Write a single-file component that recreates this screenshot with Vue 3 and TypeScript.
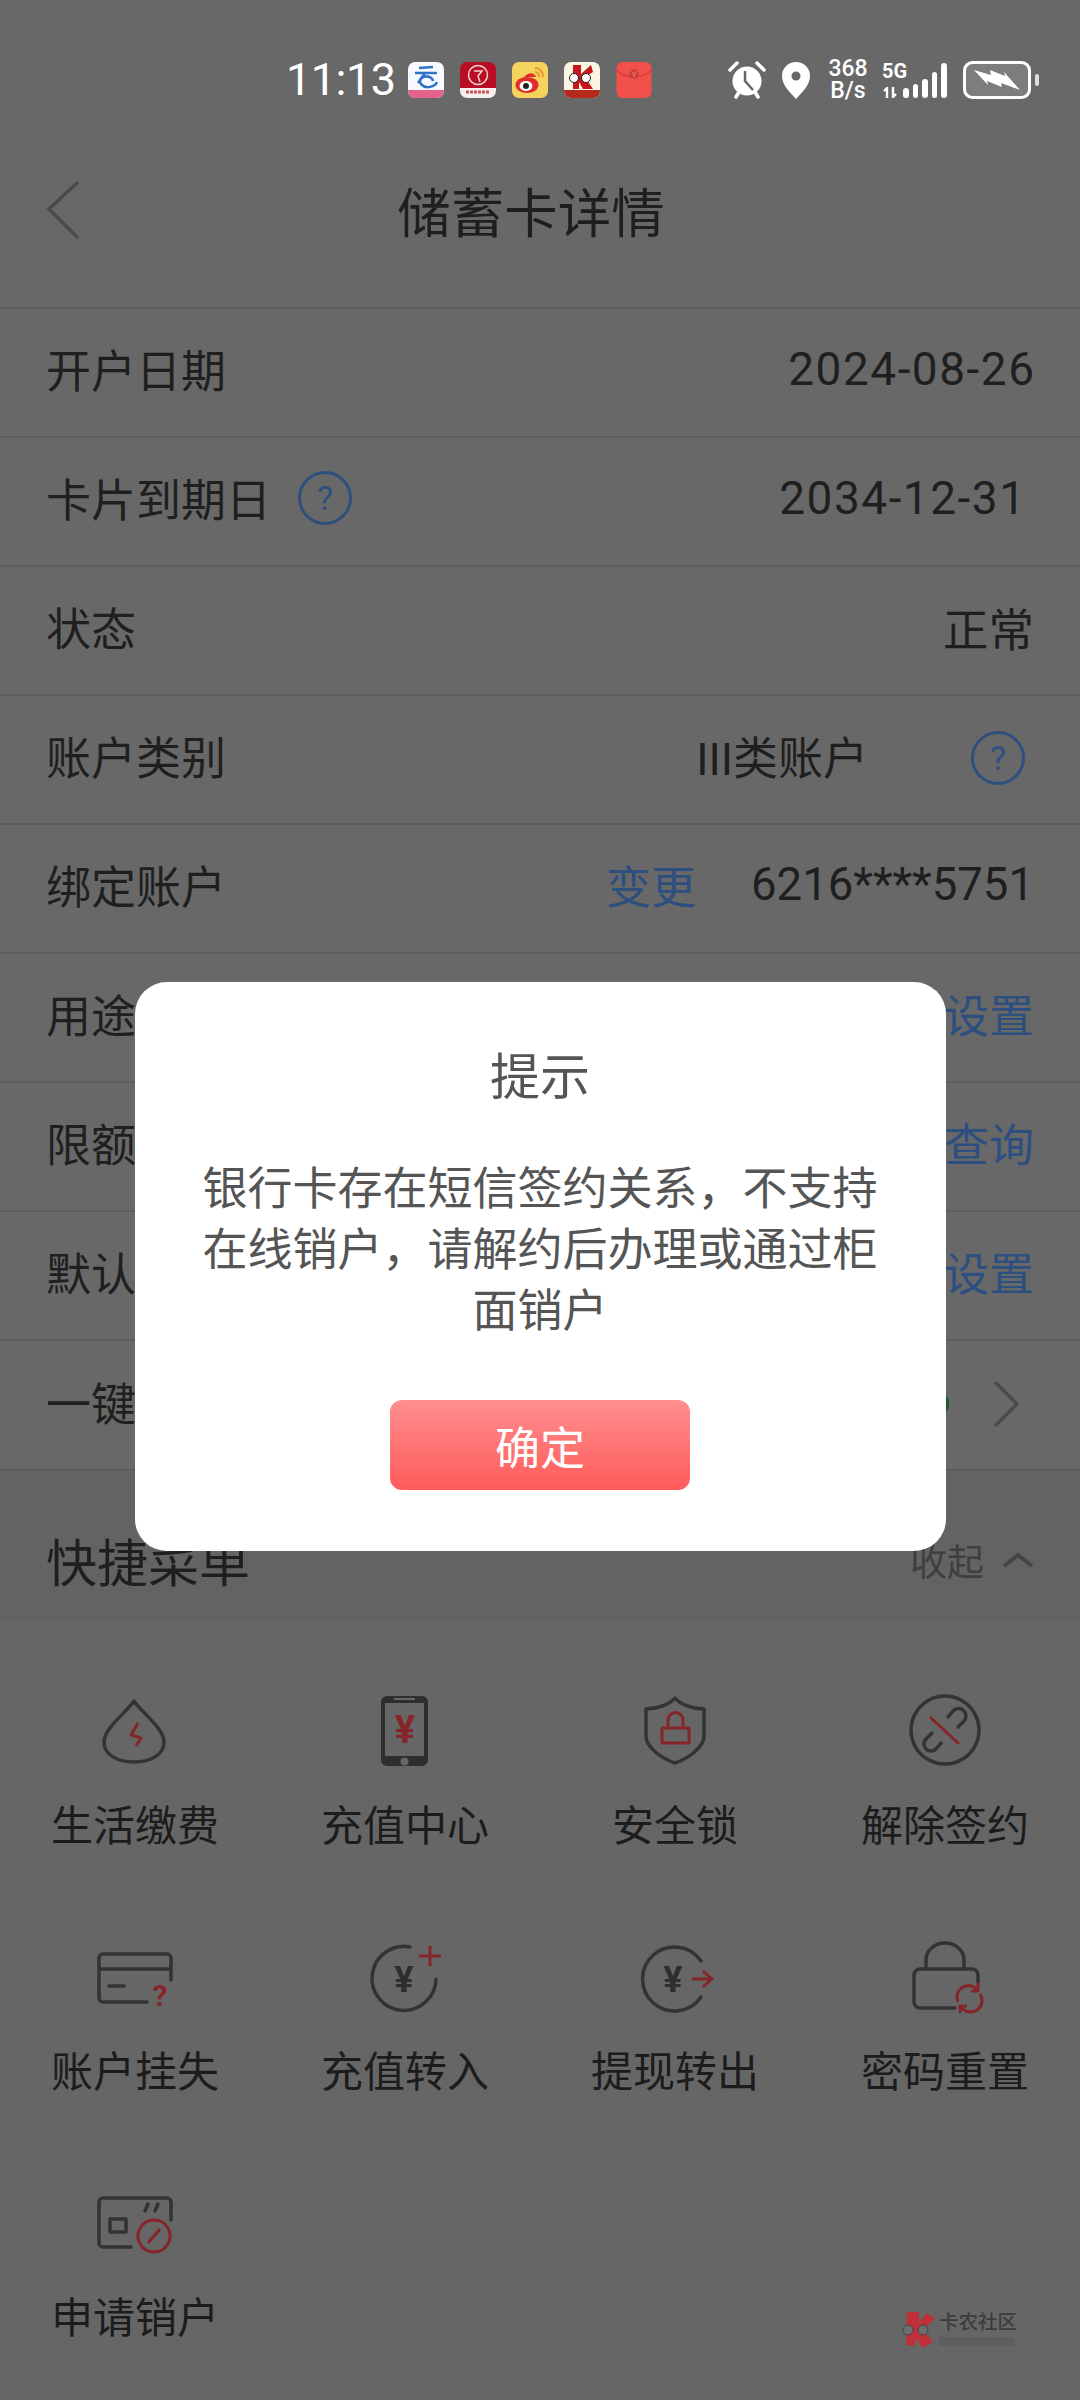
<script setup lang="ts">
interface DetailRow {
  label: string;
  help?: boolean;
  value?: string;
  action?: string;
  date?: boolean;
  kind?: "with-help" | "inset" | "toggle";
}

interface MenuItem {
  label: string;
  dark?: string;
  solid?: string;
  red?: string;
  glyph?: { text: string; x: number; y: number; size: number; red?: boolean };
}

const rows: DetailRow[] = [
  { label: "开户日期", value: "2024-08-26", date: true },
  { label: "卡片到期日", help: true, value: "2034-12-31", date: true, kind: "inset" },
  { label: "状态", value: "正常" },
  { label: "账户类别", value: "III类账户", kind: "with-help" },
  { label: "绑定账户", action: "变更", value: "6216****5751" },
  { label: "用途", action: "设置" },
  { label: "限额", action: "查询" },
  { label: "默认", action: "设置" },
  { label: "一键", kind: "toggle" },
];

const menu: MenuItem[] = [
  {
    label: "生活缴费",
    dark: "M39 11C32 22 9 38 9 52C9 65 23 72 39 72C55 72 69 65 69 52C69 38 46 22 39 11Z",
    red: "M43 33L36 45L46 48L41 56",
  },
  {
    label: "充值中心",
    solid:
      "M22 6H57A6 6 0 0 1 63 12V70A6 6 0 0 1 57 76H22A6 6 0 0 1 16 70V12A6 6 0 0 1 22 6ZM20 13V66H59V13ZM29 8V10H50V8ZM39.500 67.500A4 4 0 1 0 39.501 75.500A4 4 0 1 0 39.500 67.500Z",
    glyph: { text: "¥", x: 40, y: 53, size: 38, red: true },
  },
  {
    label: "安全锁",
    dark: "M40 8C35 14 23 19 11 19V46C11 58 28 69 40 73C52 69 69 58 69 46V19C57 19 45 14 40 8Z",
    red: "M27 38H54V53H27ZM33 38V30A7.500 7.500 0 0 1 48 30V38",
  },
  {
    label: "解除签约",
    dark: "M40 6A34 34 0 1 0 40.010 6ZM43 27L48 21A7 7 0 0 1 59 31L53 37M36 53L31 59A7 7 0 0 1 21 49L27 43",
    red: "M25 27L54 54",
  },
  {
    label: "账户挂失",
    dark: "M52 66H8A4 4 0 0 1 4 62V22A4 4 0 0 1 8 18H72A4 4 0 0 1 76 22V44M4 33H76M14 50H29",
    glyph: { text: "?", x: 65, y: 70, size: 30, red: true },
  },
  {
    label: "充值转入",
    dark: "M45 11A32 32 0 1 0 71 43",
    red: "M65 10V30M54 20H76",
    glyph: { text: "¥", x: 39, y: 56, size: 36 },
  },
  {
    label: "提现转出",
    dark: "M66 25A32 32 0 1 0 66 61",
    red: "M57 43H76M68 35L77 43L68 51",
    glyph: { text: "¥", x: 38, y: 56, size: 36 },
  },
  {
    label: "密码重置",
    dark: "M50 72H15A6 6 0 0 1 9 66V39A6 6 0 0 1 15 33H67A6 6 0 0 1 73 39V46M21 33V24A19 17 0 0 1 59 24V33",
    red: "M53 66A11.500 11.500 0 0 1 72 53.500M75 58A11.500 11.500 0 0 1 56 71M73 47V55H66M55 77V70H62",
  },
  {
    label: "申请销户",
    dark: "M36 65H8A4 4 0 0 1 4 61V20A4 4 0 0 1 8 16H72A4 4 0 0 1 76 20V38M15 37H31V50H15ZM50 29L53 22M60 29L63 22",
    red: "M59 38A16 16 0 1 0 59.010 38ZM53 61L65 47",
  },
];
</script>

<template>
  <div class="screen">
    <header class="status">
      <span class="time">11:13</span>
      <div class="apps">
        <svg class="app" viewBox="0 0 36 36">
          <rect width="36" height="36" rx="7" fill="#f7fbff" />
          <path d="M0 28H36V29A7 7 0 0 1 29 36H7A7 7 0 0 1 0 29Z" fill="#e4638d" />
          <path d="M11 6L25 5M7 11H29M17 11L10 21" stroke="#2f72c8" stroke-width="2.500" fill="none" />
          <path d="M25 19A6.500 5 0 1 0 14 23C18 27 27 25 29 20" stroke="#2f72c8" stroke-width="2.500" fill="none" />
        </svg>
        <svg class="app" viewBox="0 0 36 36">
          <rect width="36" height="36" rx="7" fill="#b90d24" />
          <path d="M0 26H36V29A7 7 0 0 1 29 36H7A7 7 0 0 1 0 29Z" fill="#f3f0ee" />
          <circle cx="18" cy="13" r="9.500" fill="none" stroke="#f3d3d3" stroke-width="1.500" />
          <path d="M14 9H22L18 14L20 20" fill="none" stroke="#f3d3d3" stroke-width="1.500" />
          <path d="M6 30H30" stroke="#c8535d" stroke-width="3" stroke-dasharray="3 1" />
        </svg>
        <svg class="app" viewBox="0 0 36 36">
          <rect width="36" height="36" rx="7" fill="#f6d25f" />
          <ellipse cx="15" cy="23" rx="11.500" ry="8" fill="#df2e2a" />
          <path d="M12 15C17 9 23 11 24 15" fill="#df2e2a" />
          <ellipse cx="14" cy="24" rx="6.500" ry="5" fill="#fff" />
          <circle cx="14" cy="24" r="3" fill="#222" />
          <path d="M23 6A8 8 0 0 1 31 15M23 10A4 4 0 0 1 27 15" fill="none" stroke="#e79a2c" stroke-width="2" />
        </svg>
        <svg class="app" viewBox="0 0 36 36">
          <rect width="36" height="36" rx="7" fill="#fbf6e4" />
          <path d="M0 28H36V29A7 7 0 0 1 29 36H7A7 7 0 0 1 0 29Z" fill="#b52a1c" />
          <path d="M9 3H17V12L27 3L29 10L21 15L29 27H19L15 20L15 27H9Z" fill="#c8161d" />
          <circle cx="10" cy="16" r="4.500" fill="#fff" stroke="#222" />
          <circle cx="22" cy="16" r="4.500" fill="#fff" stroke="#222" />
        </svg>
        <svg class="app" viewBox="0 0 36 36">
          <rect x="0.500" width="35" height="36" rx="6" fill="#f2504b" />
          <path d="M0.500 8C8 17 28 17 35.500 8" fill="none" stroke="#d83f3b" stroke-width="1.500" />
          <circle cx="18" cy="12" r="5" fill="#c8413b" />
          <path d="M15.500 9.500L18 12.500L20.500 9.500M18 12.500V15" stroke="#f2807a" fill="none" />
        </svg>
      </div>

      <div class="indicators">
        <svg class="alarm" viewBox="0 0 38 38">
          <circle cx="19" cy="20" r="14.500" fill="#fff" />
          <path d="M2 9L9 2M36 9L29 2M8 36L11 31M30 36L27 31" stroke="#fff" stroke-width="3.500" stroke-linecap="round" />
          <path d="M17 10V20L25 29" fill="none" stroke="#666" stroke-width="2.500" />
        </svg>
        <svg class="pin" viewBox="0 0 30 38">
          <path d="M15 38C10 32 1 25 1 15A14 14 0 0 1 29 15C29 25 20 32 15 38Z" fill="#fff" />
          <circle cx="15" cy="15" r="4.500" fill="#666" />
        </svg>
        <div class="speed">368<br />B/s</div>
        <div class="signal">
          <span class="net">5G</span>
          <svg class="net-arrows" viewBox="0 0 15 11">
            <path d="M4 11V1L1 4M10 0V10L13 7" stroke="#fff" stroke-width="2.400" fill="none" />
          </svg>
          <i class="bar b1"></i>
          <i class="bar b2"></i>
          <i class="bar b3"></i>
          <i class="bar b4"></i>
          <i class="bar b5"></i>
        </div>
        <div class="battery">
          <svg viewBox="0 0 68 38" class="battery-body">
            <rect x="1.500" y="1.500" width="65" height="35" rx="8" fill="#7d7d7d" stroke="#fff" stroke-width="3" />
            <path d="M11 9L28 14L27 9L42 15L41 11L57 29L38 22L39 26L24 20L25 24Z" fill="#fff" />
          </svg>
          <i class="nub"></i>
        </div>
      </div>
    </header>

    <nav class="nav">
      <svg class="back" viewBox="0 0 34 58">
        <path d="M32 2L4 28L32 56" fill="none" stroke="#4a4a4a" stroke-width="3.500" stroke-linecap="round" />
      </svg>
      <h1 class="title">储蓄卡详情</h1>
    </nav>

    <section class="rows">
      <div v-for="row in rows" :key="row.label" class="row">
        <div class="left">
          <span>{{ row.label }}</span>
          <span v-if="row.help" class="help">?</span>
        </div>
        <div class="right" :class="row.kind">
          <span v-if="row.action" class="link">{{ row.action }}</span>
          <span v-if="row.value" class="value" :class="{ date: row.date }">{{ row.value }}</span>
          <span v-if="row.kind === 'with-help'" class="help">?</span>
          <template v-if="row.kind === 'toggle'">
            <i class="dot"></i>
            <svg class="more" viewBox="0 0 26 46">
              <path d="M2 2L23 23L2 44" fill="none" stroke="#4c4c4c" stroke-width="3.500" stroke-linecap="round" />
            </svg>
          </template>
        </div>
      </div>
    </section>

    <section class="menu-head">
      <h2>快捷菜单</h2>
      <div class="fold">
        <span>收起</span>
        <svg viewBox="0 0 32 16">
          <path d="M2 14L16 3L30 14" fill="none" stroke="#444" stroke-width="4" />
        </svg>
      </div>
    </section>

    <section class="grid">
      <div v-for="item in menu" :key="item.label" class="cell">
        <svg class="icon" viewBox="0 0 80 80">
          <path v-if="item.solid" :d="item.solid" fill="#2e2e2e" fill-rule="evenodd" />
          <path v-if="item.dark" :d="item.dark" fill="none" stroke="#333" stroke-width="3.500" stroke-linecap="round" stroke-linejoin="round" />
          <path v-if="item.red" :d="item.red" fill="none" stroke="#862529" stroke-width="3" stroke-linejoin="round" />
          <text
            v-if="item.glyph"
            class="glyph"
            text-anchor="middle"
            :x="item.glyph.x"
            :y="item.glyph.y"
            :font-size="item.glyph.size"
            :fill="item.glyph.red ? '#862529' : '#2e2e2e'"
          >{{ item.glyph.text }}</text>
        </svg>
        <span class="cell-label">{{ item.label }}</span>
      </div>
    </section>

    <!-- dialog and watermark sit over the page -->
    <div class="dialog-wrap">
      <div class="dialog">
        <div class="dialog-title">提示</div>
        <p class="dialog-text">银行卡存在短信签约关系，不支持在线销户，请解约后办理或通过柜面销户</p>
        <button class="ok">确定</button>
      </div>
    </div>

    <div class="mark">
      <svg viewBox="0 0 38 36" class="mark-logo">
        <path d="M8 0H20V10L28 1L36 7L24 17L34 30L23 36L17 26L16 34L7 33Z" fill="#c03039" />
        <circle cx="9" cy="18" r="5" fill="#6e6e6e" stroke="#444" />
        <circle cx="24" cy="18" r="5" fill="#6e6e6e" stroke="#444" />
      </svg>
      <div class="mark-text">
        <span>卡农社区</span>
        <i></i>
      </div>
    </div>
  </div>
</template>

<style scoped>
.screen {
  position: relative;
  width: 1080px;
  height: 2400px;
  overflow: hidden;
  background: #666;
  color: #1f1f1f;
  font-family: Roboto, "Noto Sans CJK SC", sans-serif;
}

.status {
  display: flex;
  align-items: center;
  height: 80px;
  padding: 40px 0 0 286px;
  box-sizing: content-box;
  background: #686868;
  color: #fff;
}
.time {
  width: 122px;
  font-size: 45px;
  line-height: 80px;
  letter-spacing: -0.5px;
}
.apps {
  display: flex;
  gap: 16px;
}
.app {
  width: 36px;
  height: 36px;
  display: block;
}
.indicators {
  display: flex;
  align-items: center;
  margin-left: 76px;
}
.alarm {
  width: 38px;
  height: 38px;
}
.pin {
  width: 30px;
  height: 38px;
  margin-left: 15px;
}
.speed {
  width: 42px;
  margin-left: 16px;
  font-size: 23px;
  line-height: 22px;
  font-weight: 500;
  text-align: center;
}
.signal {
  position: relative;
  display: flex;
  align-items: flex-end;
  gap: 4px;
  width: 66px;
  height: 36px;
  margin-left: 13px;
  padding-left: 21px;
  box-sizing: border-box;
}
.net {
  position: absolute;
  left: 0;
  top: -1px;
  font-size: 20px;
  line-height: 20px;
  font-weight: 700;
}
.net-arrows {
  position: absolute;
  left: 1px;
  bottom: 0;
  width: 15px;
  height: 11px;
}
.bar {
  display: block;
  width: 5.500px;
  background: #fff;
  border-radius: 3px;
}
.b1 { height: 10px; }
.b2 { height: 14px; }
.b3 { height: 19px; }
.b4 { height: 26px; }
.b5 { height: 35px; }
.battery {
  display: flex;
  align-items: center;
  gap: 4px;
  margin-left: 15px;
}
.battery-body {
  width: 68px;
  height: 38px;
}
.nub {
  display: block;
  width: 4px;
  height: 12px;
  background: #ddd;
  border-radius: 2px;
}

.nav {
  position: relative;
  display: flex;
  align-items: center;
  justify-content: center;
  height: 187px;
  padding-bottom: 8px;
  box-sizing: border-box;
  background: #686868;
}
.back {
  position: absolute;
  left: 45px;
  top: 61px;
  width: 34px;
  height: 58px;
}
.title {
  margin: 0 18px 0 0;
  font-size: 53.500px;
  font-weight: 400;
  color: #1f1f1f;
}

.row {
  display: flex;
  align-items: center;
  justify-content: space-between;
  height: 129px;
  padding: 0 46px 8px;
  box-sizing: border-box;
  border-top: 2px solid #5d5d5d;
  background: #686868;
  font-size: 45px;
}
.row:last-child {
  height: 132px;
  border-bottom: 2px solid #5d5d5d;
}
.left,
.right {
  display: flex;
  align-items: center;
}
.value {
  font-size: 45.500px;
}
.value.date {
  margin-right: -1.500px;
  font-size: 46px;
  letter-spacing: 1.500px;
}
.right.inset {
  padding-right: 9px;
}
.right.with-help .value {
  font-size: 45px;
}
.right.with-help .help {
  margin: 5px 9px 0 103px;
}
.right.toggle {
  margin-top: 5px;
  padding-right: 14px;
}
.link {
  margin-right: 55px;
  color: #2d4f80;
}
.right .link:last-child {
  margin-right: 0;
}
.help {
  display: flex;
  align-items: center;
  justify-content: center;
  width: 54px;
  height: 54px;
  margin-left: 27px;
  box-sizing: border-box;
  border: 3px solid #2f4f7f;
  border-radius: 50%;
  font-size: 34px;
  line-height: 1;
  color: #2f4f7f;
}
.dot {
  display: block;
  width: 28px;
  height: 28px;
  margin-right: 45px;
  border-radius: 50%;
  background: #1f5a1c;
}
.more {
  width: 26px;
  height: 46px;
}

.menu-head {
  display: flex;
  align-items: center;
  justify-content: space-between;
  height: 151px;
  padding: 26px 46px 0;
  box-sizing: border-box;
  background: #636363;
}
.menu-head h2 {
  margin: 0;
  font-size: 51px;
  font-weight: 400;
}
.fold {
  display: flex;
  align-items: center;
  gap: 18px;
  color: #3f3f3f;
  font-size: 37px;
}
.fold svg {
  width: 32px;
  height: 16px;
}

.grid {
  display: grid;
  grid-template-columns: repeat(4, 270px);
  grid-auto-rows: 246px;
  padding-top: 48px;
}
.cell {
  display: flex;
  flex-direction: column;
  align-items: center;
  padding-top: 20px;
  box-sizing: border-box;
}
.icon {
  width: 80px;
  height: 80px;
}
.glyph {
  font-family: Roboto, sans-serif;
  font-weight: 700;
}
.cell-label {
  margin-top: 30px;
  font-size: 42px;
  line-height: 54px;
  color: #1c1c1c;
}

.dialog-wrap {
  position: absolute;
  top: 982px;
  left: 0;
  right: 0;
  display: flex;
  justify-content: center;
}
.dialog {
  display: flex;
  flex-direction: column;
  align-items: center;
  width: 811px;
  height: 569px;
  padding: 66px 65px 0;
  box-sizing: border-box;
  border-radius: 32px;
  background: #fff;
  color: #555;
}
.dialog-title {
  font-size: 50px;
  line-height: 60px;
}
.dialog-text {
  margin: 51px 0 0;
  font-size: 45px;
  line-height: 61px;
  text-align: center;
}
.ok {
  width: 300px;
  height: 90px;
  margin-top: 58px;
  border: 0;
  border-radius: 12px;
  background: linear-gradient(#ff8f8f, #ff5a5a);
  color: #fff;
  font-family: inherit;
  font-size: 45px;
}

.mark {
  position: absolute;
  left: 899px;
  top: 2312px;
  display: flex;
  gap: 2px;
}
.mark-logo {
  width: 38px;
  height: 36px;
}
.mark-text {
  display: flex;
  flex-direction: column;
  gap: 3px;
}
.mark-text span {
  font-size: 19.500px;
  line-height: 22px;
  font-weight: 500;
  color: #3c3c3c;
}
.mark-text i {
  display: block;
  width: 76px;
  height: 9px;
  background: #5f5f5f;
}
</style>
